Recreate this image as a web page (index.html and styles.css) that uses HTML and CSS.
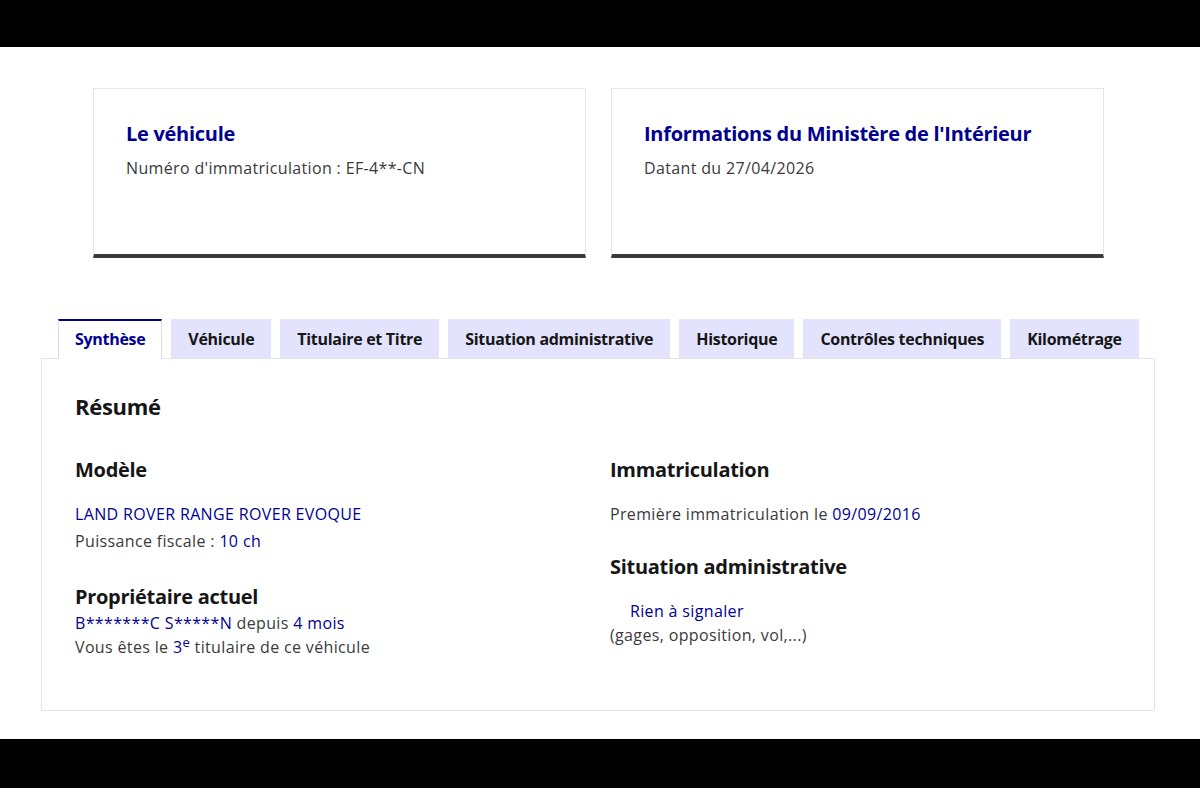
FILE: index.html
```html
<!DOCTYPE html>
<html lang="fr">
<head>
  <meta charset="utf-8" />
  <title>Historique du véhicule</title>
  <link rel="stylesheet" href="styles.css">
</head>
<body>
  <div class="band"></div>

  <main class="page">
    <section class="cards">
      <div class="card">
        <h2 class="card-title">Le véhicule</h2>
        <p class="card-text">Numéro d'immatriculation : EF-4**-CN</p>
      </div>
      <div class="card">
        <h2 class="card-title">Informations du Ministère de l'Intérieur</h2>
        <p class="card-text">Datant du 27/04/2026</p>
      </div>
    </section>

    <section class="tabs">
      <ul class="tab-list">
        <li class="tab active">Synthèse</li>
        <li class="tab">Véhicule</li>
        <li class="tab">Titulaire et Titre</li>
        <li class="tab">Situation administrative</li>
        <li class="tab">Historique</li>
        <li class="tab">Contrôles techniques</li>
        <li class="tab">Kilométrage</li>
      </ul>

      <div class="panel">
        <h3 class="panel-title">Résumé</h3>
        <div class="cols">
          <div class="col">
            <h4 class="sub">Modèle</h4>
            <p class="line first blue">LAND ROVER RANGE ROVER EVOQUE</p>
            <p class="line gap3">Puissance fiscale : <span class="blue">10 ch</span></p>
            <h4 class="sub owner">Propriétaire actuel</h4>
            <p class="line"><span class="blue">B*******C S*****N</span> depuis <span class="blue">4 mois</span></p>
            <p class="line">Vous êtes le <span class="blue">3<sup>e</sup></span> titulaire de ce véhicule</p>
          </div>
          <div class="col">
            <h4 class="sub">Immatriculation</h4>
            <p class="line first">Première immatriculation le <span class="blue">09/09/2016</span></p>
            <h4 class="sub situ">Situation administrative</h4>
            <p class="line first indent blue">Rien à signaler</p>
            <p class="line">(gages, opposition, vol,...)</p>
          </div>
        </div>
      </div>
    </section>
  </main>

  <div class="band bottom"></div>
</body>
</html>
```

FILE: styles.css
```css
* {
  margin: 0;
  padding: 0;
  box-sizing: border-box;
}

body {
  background: #fff;
  font-family: "Open Sans", Lato, sans-serif;
  color: #3a3a3a;
  font-size: 16px;
  line-height: 24px;
  letter-spacing: 0.35px;
}

.band {
  height: 47px;
  background: #000;
}
.band.bottom {
  height: 49px;
}

.page {
  height: 692px;
  padding-top: 41px;
}

.blue {
  color: #000091;
}

/* cartes du haut */
.cards {
  width: 1011px;
  margin-left: 93px;
  display: flex;
  gap: 25px;
}

.card {
  flex: 1;
  height: 170px;
  border: 1px solid #e5e5e5;
  border-bottom: 4px solid #3a3a3a;
  padding: 31px 32px 30px;
}

.card-title {
  font-size: 20px;
  line-height: 28px;
  font-weight: 700;
  letter-spacing: -0.28px;
  color: #000091;
}

.card-text {
  margin-top: 8px;
}

/* onglets */
.tabs {
  width: 1114px;
  margin: 61px 0 0 41px;
}

.tab-list {
  list-style: none;
  display: flex;
  gap: 9px;
  padding-left: 17px;
}

.tab {
  height: 39px;
  line-height: 39px;
  padding: 1px 17px 0;
  background: #e3e3fd;
  color: #161616;
  font-weight: 700;
  letter-spacing: -0.3px;
  white-space: nowrap;
  flex-shrink: 0;
}

.tab.active {
  background: #fff;
  color: #000091;
  border-top: 2px solid #000091;
  border-left: 1px solid #ddd;
  border-right: 1px solid #ddd;
  padding: 0 16px;
  line-height: 37px;
  margin-bottom: -1px;
  height: 40px;
  position: relative;
}

.panel {
  border: 1px solid #e5e5e5;
  padding: 33px 33px 51px;
}

.panel-title {
  font-size: 22px;
  line-height: 28px;
  font-weight: 700;
  letter-spacing: -0.3px;
  color: #161616;
}

.cols {
  display: grid;
  grid-template-columns: 1fr 1fr;
  gap: 24px;
  margin-top: 36px;
}

.sub {
  font-size: 20px;
  line-height: 28px;
  font-weight: 700;
  letter-spacing: -0.3px;
  color: #161616;
}

.line.first {
  margin-top: 18px;
}
.line.gap3 {
  margin-top: 3px;
}
.sub.owner {
  margin-top: 30px;
}
.sub.situ {
  margin-top: 27px;
}
.indent {
  padding-left: 20px;
}

sup {
  font-size: 13px;
  line-height: 0;
  vertical-align: 6px;
}
```
